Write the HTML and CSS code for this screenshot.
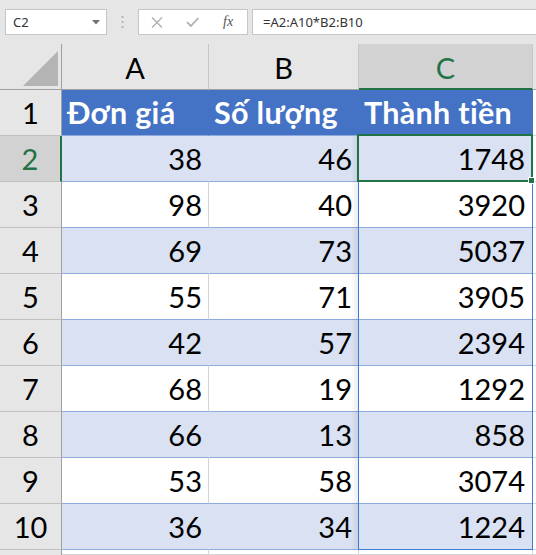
FILE: index.html
```html
<!DOCTYPE html>
<html lang="vi">
<head>
  <meta charset="UTF-8">
  <title>Thành tiền</title>
  <link rel="stylesheet" href="styles.css">
</head>
<body>
  <div class="formula-bar">
    <div class="name-box">
      <span>C2</span>
      <svg class="caret" width="8" height="5" viewBox="0 0 8 5"><path d="M0 0h8L4 4.5z" fill="#707070"/></svg>
    </div>
    <div class="grip">
      <svg width="3" height="12" viewBox="0 0 3 12" fill="#b3b3b3">
        <rect x="0.5" y="0" width="2" height="2"/>
        <rect x="0.5" y="5" width="2" height="2"/>
        <rect x="0.5" y="10" width="2" height="2"/>
      </svg>
    </div>
    <div class="fx-buttons">
      <svg class="btn-cancel" width="12" height="11" viewBox="0 0 12 11"><path d="M1 0.5l10 10M11 0.5l-10 10" stroke="#b0b0b0" stroke-width="1.4" fill="none"/></svg>
      <svg class="btn-enter" width="13" height="10" viewBox="0 0 13 10"><path d="M1 5.2l3.8 3.8L12.3 1" stroke="#b0b0b0" stroke-width="1.8" fill="none"/></svg>
      <span class="fx">fx</span>
    </div>
    <div class="formula-input">=A2:A10*B2:B10</div>
  </div>

  <div class="sheet">
    <!-- column headers -->
    <div class="corner">
      <svg width="35" height="35" viewBox="0 0 35 35"><path d="M0 35H35V0z" fill="#b4b4b4"/></svg>
    </div>
    <div class="col-head">A</div>
    <div class="col-head">B</div>
    <div class="col-head active">C</div>
    <div class="col-head"></div>

    <div class="row-head">1</div>
    <div class="cell th">Đơn giá</div>
    <div class="cell th">Số lượng</div>
    <div class="cell th">Thành tiền</div>
    <div class="cell blank"></div>

    <div class="row-head active">2</div>
    <div class="cell band">38</div>
    <div class="cell band">46</div>
    <div class="cell band col-c">1748</div>
    <div class="cell blank"></div>

    <div class="row-head">3</div>
    <div class="cell">98</div>
    <div class="cell">40</div>
    <div class="cell col-c">3920</div>
    <div class="cell blank"></div>

    <div class="row-head">4</div>
    <div class="cell band">69</div>
    <div class="cell band">73</div>
    <div class="cell band col-c">5037</div>
    <div class="cell blank"></div>

    <div class="row-head">5</div>
    <div class="cell">55</div>
    <div class="cell">71</div>
    <div class="cell col-c">3905</div>
    <div class="cell blank"></div>

    <div class="row-head">6</div>
    <div class="cell band">42</div>
    <div class="cell band">57</div>
    <div class="cell band col-c">2394</div>
    <div class="cell blank"></div>

    <div class="row-head">7</div>
    <div class="cell">68</div>
    <div class="cell">19</div>
    <div class="cell col-c">1292</div>
    <div class="cell blank"></div>

    <div class="row-head">8</div>
    <div class="cell band">66</div>
    <div class="cell band">13</div>
    <div class="cell band col-c">858</div>
    <div class="cell blank"></div>

    <div class="row-head">9</div>
    <div class="cell">53</div>
    <div class="cell">58</div>
    <div class="cell col-c">3074</div>
    <div class="cell blank"></div>

    <div class="row-head">10</div>
    <div class="cell band">36</div>
    <div class="cell band">34</div>
    <div class="cell band col-c">1224</div>
    <div class="cell blank"></div>

    <!-- next row, only a sliver is visible -->
    <div class="row-head edge"></div>
    <div class="cell empty"></div>
    <div class="cell empty"></div>
    <div class="cell empty"></div>
    <div class="cell blank"></div>

    <!-- spill range and active cell outlines -->
    <div class="spill"></div>
    <div class="active-cell"><span class="fill-handle"></span></div>
  </div>
</body>
</html>
```

FILE: styles.css
```css
html, body {
  margin: 0;
  padding: 0;
  overflow: hidden;
}

body {
  background-color: #ffffff;
  font-family: 'Lato', 'Noto Sans', sans-serif;
  color: #000000;
}

/* formula bar */

.formula-bar {
  display: flex;
  align-items: center;
  height: 44px;
  padding-left: 5px;
  background-color: #e6e6e6;
  box-sizing: border-box;
  font-family: 'Noto Sans', 'Open Sans', sans-serif;
  font-size: 13px;
  color: #333333;
}

.name-box {
  display: flex;
  align-items: center;
  justify-content: space-between;
  width: 102px;
  height: 26px;
  padding: 0 6px 0 7px;
  box-sizing: border-box;
  background-color: #ffffff;
  border: 1px solid #c6c6c6;
}

.grip {
  display: flex;
  justify-content: center;
  width: 31px;
}

.fx-buttons {
  display: flex;
  align-items: center;
  width: 110px;
  height: 26px;
  padding-left: 12px;
  box-sizing: border-box;
  background-color: #ffffff;
  border: 1px solid #c6c6c6;
}

.btn-enter {
  margin-left: 23px;
}

.fx {
  margin-left: 24px;
  font-family: 'Liberation Serif', serif;
  font-style: italic;
  font-size: 14px;
  color: #555555;
}

.formula-input {
  flex: 1;
  height: 26px;
  margin-left: 4px;
  margin-right: -2px;
  padding-left: 10px;
  line-height: 24px;
  box-sizing: border-box;
  background-color: #ffffff;
  border: 1px solid #c6c6c6;
}

/* grid */

.sheet {
  position: relative;
  display: grid;
  grid-template-columns: 62px 147px 150px 174px 1fr;
  grid-template-rows: repeat(11, 46px) 5px;
  font-size: 29px;
}

.sheet > div {
  box-sizing: border-box;
}

.corner {
  display: flex;
  align-items: flex-end;
  justify-content: flex-end;
  padding: 0 3px 3px 0;
  background-color: #e6e6e6;
  border-right: 1px solid #a0a0a0;
  border-bottom: 1px solid #a0a0a0;
}

.corner svg {
  display: block;
}

.col-head {
  padding-top: 3px;
  line-height: 42px;
  text-align: center;
  background-color: #e6e6e6;
  border-right: 1px solid #c6c6c6;
  border-bottom: 1px solid #a0a0a0;
}

.col-head.active {
  background-color: #d2d2d2;
  color: #217346;
  border-bottom: 2px solid #217346;
}

.row-head {
  line-height: 45px;
  text-align: center;
  background-color: #e6e6e6;
  border-right: 1px solid #a0a0a0;
  border-bottom: 1px solid #c0c0c0;
}

.row-head.active {
  background-color: #d2d2d2;
  color: #217346;
  border-right: 2px solid #217346;
}

.row-head.edge {
  border-bottom: none;
}

.cell {
  padding: 0 6px;
  line-height: 45px;
  text-align: right;
  white-space: nowrap;
  overflow: hidden;
  border-right: 1px solid #d4d4d4;
  border-bottom: 1px solid #8ea9db;
}

.cell.col-c {
  padding-right: 7px;
}

.cell.band {
  background-color: #d9e1f2;
  border-right-color: #d9e1f2;
}

.cell.th {
  padding-left: 5px;
  text-align: left;
  font-size: 30.5px;
  font-weight: bold;
  letter-spacing: 0.3px;
  color: #ffffff;
  background-color: #4472c4;
  border-right-color: #4472c4;
}

.cell.empty,
.cell.blank {
  border-bottom-color: #d4d4d4;
}

/* overlays */

.spill {
  position: absolute;
  left: 358px;
  top: 91px;
  width: 175px;
  height: 415px;
  border: 1px solid #3a7bd5;
  box-sizing: border-box;
  pointer-events: none;
}

.spill::before {
  content: "";
  position: absolute;
  left: -8px;
  top: 0;
  bottom: 0;
  width: 7px;
  background: linear-gradient(to right, rgba(0, 0, 0, 0), rgba(0, 0, 0, 0.07));
}

.active-cell {
  position: absolute;
  left: 357px;
  top: 90px;
  width: 176px;
  height: 48px;
  border: 2px solid #217346;
  box-sizing: border-box;
}

.fill-handle {
  position: absolute;
  right: -4px;
  bottom: -4px;
  width: 5px;
  height: 5px;
  background-color: #217346;
  border: 1px solid #ffffff;
}
```
